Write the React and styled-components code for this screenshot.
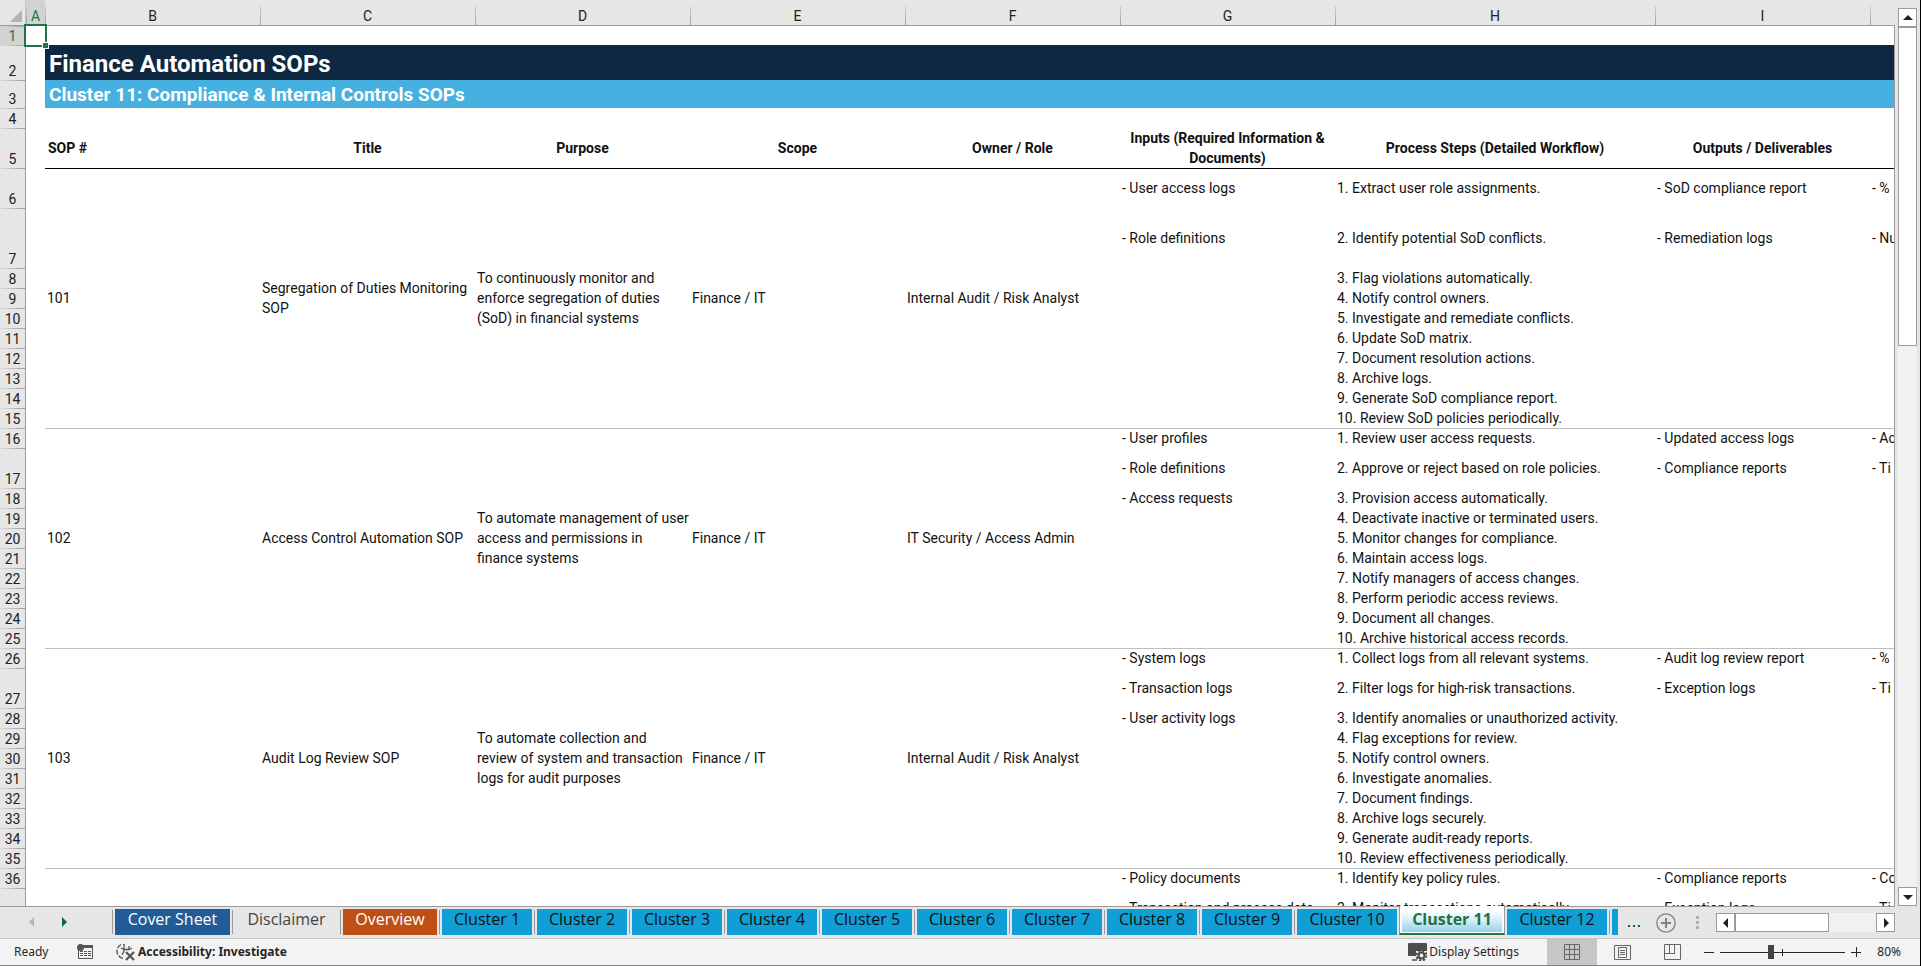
import React from "react";
import styled, { createGlobalStyle, css } from "styled-components";

const color = {
  chrome: "#e6e6e6",
  selected: "#d2d2d2",
  line: "#9b9b9b",
  rule: "#bfbfbf",
  green: "#217346",
  navy: "#0e2841",
  sky: "#46b1e1",
  tab: "#0f9ed5",
};

const sheetFont = '"Roboto", "Liberation Sans", sans-serif';
const uiFont = '"Open Sans", "Noto Sans", sans-serif';

const GlobalStyle = createGlobalStyle`
  *, *::before, *::after { box-sizing: border-box; }
  html, body { margin: 0; overflow: hidden; }
  button { margin: 0; padding: 0; border: 0; background: none; color: inherit; font: inherit; }
`;

const Window = styled.div`
  display: flex;
  flex-direction: column;
  height: 100vh;
  border-right: 1px solid #000;
  background: ${color.chrome};
  overflow: hidden;
`;

const Workspace = styled.div`
  display: flex;
  flex: 1;
  min-height: 0;
`;

const Viewport = styled.main`
  flex: 1;
  min-width: 0;
  overflow: hidden;
  background: #fff;
`;

/* ---------- grid ---------- */

const Grid = styled.table`
  width: 100%;
  table-layout: fixed;
  border-collapse: separate;
  border-spacing: 0;
  font: 14px/20px ${sheetFont};
  color: #111;
`;

const Col = styled.col`
  width: ${(p) => (p.$w ? p.$w + "px" : "auto")};
`;

const ColumnHead = styled.th`
  height: 26px;
  padding: 7px 0 0;
  font-weight: 400;
  line-height: 19px;
  text-align: center;
  vertical-align: top;
  color: ${(p) => (p.$active ? color.green : "#222")};
  background-color: ${(p) => (p.$active ? color.selected : color.chrome)};
  background-image: linear-gradient(${color.line}, ${color.line}),
    linear-gradient(#d0d0d0, ${color.line});
  background-repeat: no-repeat;
  background-size: 100% 1px, 1px 20px;
  background-position: 0 100%, 0 6px;
`;

const Corner = styled.td`
  height: 26px;
  padding: 10px 0 0 10px;
  vertical-align: top;
  background: ${color.chrome};
  box-shadow: inset 0 -1px ${color.line}, inset -1px 0 #c8c8c8;

  svg { display: block; }
`;

const RowHead = styled.th`
  height: ${(p) => p.$h}px;
  padding: 0 1px 0 0;
  font-weight: 400;
  line-height: 18px;
  text-align: center;
  vertical-align: bottom;
  color: ${(p) => (p.$active ? color.green : "#222")};
  background: linear-gradient(to right, #dcdcdc, ${color.line}) 0 0 / 100% 1px no-repeat
    ${(p) => (p.$active ? color.selected : color.chrome)};
  box-shadow: inset -1px 0 ${color.line};
`;

const cellRule = {
  black: "inset 0 1px #000",
  gray: `inset 0 1px ${color.rule}`,
};

const Cell = styled.td`
  padding: 0 0 0 2px;
  vertical-align: middle;
  white-space: ${(p) => (p.$clip ? "nowrap" : "normal")};
  box-shadow: ${(p) => cellRule[p.$rule] || "none"};
`;

const FieldHead = styled.th`
  padding: 0 3px;
  font-weight: 700;
  text-align: ${(p) => p.$align || "center"};
  vertical-align: middle;
`;

const Banner = styled.td`
  padding: 0 4px;
  color: #fff;
  font-weight: 700;
  white-space: nowrap;
  vertical-align: bottom;
  ${(p) =>
    p.$main
      ? css`background: ${color.navy}; font-size: 24px; line-height: 32px;`
      : css`background: ${color.sky}; font-size: 19px; line-height: 26px;`}
`;

const ActiveCell = styled.td`
  position: relative;
  z-index: 2;
  padding: 0;

  &::before {
    content: "";
    position: absolute;
    inset: -2px;
    border: 2px solid ${color.green};
  }

  &::after {
    content: "";
    position: absolute;
    right: -4px;
    bottom: -4px;
    width: 7px;
    height: 7px;
    border: 1px solid #fff;
    background: ${color.green};
  }
`;

/* ---------- scroll bars ---------- */

const VerticalRail = styled.div`
  display: flex;
  flex-direction: column;
  width: 26px;
  padding: 8px 3px 0 4px;
  background: linear-gradient(${color.line}, ${color.line}) 0 25px / 1px 100% no-repeat ${color.chrome};
`;

const ScrollButton = styled.button`
  display: flex;
  align-items: center;
  justify-content: center;
  flex: none;
  width: 19px;
  height: 19px;
  border: 1px solid ${color.line};
  background: #fff;
`;

const VerticalTrack = styled.div`
  flex: 1;
  background: #f1f1f1;
`;

const VerticalThumb = styled.div`
  height: 319px;
  border: 1px solid ${color.line};
  background: #fff;
`;

const HorizontalBar = styled.div`
  display: flex;
  width: 179px;
  height: 19px;
`;

const HorizontalTrack = styled.div`
  flex: 1;
  background: #f1f1f1;
`;

const HorizontalThumb = styled.div`
  width: 94px;
  height: 19px;
  border: 1px solid ${color.line};
  background: #fff;
`;

/* ---------- sheet tabs ---------- */

const TabBar = styled.nav`
  display: flex;
  height: 33px;
  padding-right: 25px;
  border-bottom: 1px solid #c3c3c3;
  background: linear-gradient(${color.line}, ${color.line}) 0 0 / calc(100% - 25px) 1px no-repeat
    ${color.chrome};
  font: 16px/20px ${uiFont};
`;

const TabArrows = styled.div`
  display: flex;
  align-items: center;
  gap: 16px;
  width: 112px;
  padding-left: 24px;
`;

const ArrowButton = styled.button`
  display: flex;
  align-items: center;
  justify-content: center;
  width: 16px;
  height: 20px;
`;

const Tabs = styled.div`
  display: flex;
  align-items: flex-start;
`;

const tones = {
  navy: css`background: #215c98; color: #fff;`,
  plain: css`color: #444;`,
  rust: css`background: #c04f15; color: #fff;`,
  sky: css`background: ${color.tab}; color: #111;`,
};

const TabSlot = styled.div`
  padding: 3px 2px 0;
  background: ${(p) =>
    p.$bare ? "none" : `linear-gradient(${color.line}, ${color.line}) 0 4px / 1px 24px no-repeat`};
  padding-left: ${(p) => (p.$bare ? 2 : 3)}px;
`;

const Tab = styled.button`
  display: block;
  width: ${(p) => p.$w}px;
  height: 26px;
  padding-bottom: 6px;
  white-space: nowrap;
  ${(p) => tones[p.$tone]}
`;

const ActiveSlot = styled.div`
  height: 29px;
  padding: 2px 2px 1px;
  border: solid ${color.line};
  border-width: 0 1px;
  border-bottom: 2px solid ${color.green};
  background: #fff;
`;

const ActiveTab = styled.button`
  display: block;
  width: 100px;
  height: 24px;
  padding-bottom: 2px;
  background: linear-gradient(#fff 10%, #d3ebf6 55%, #93d0ec);
  color: ${color.green};
  font-weight: 700;
  white-space: nowrap;
`;

const MoreTabs = styled.button`
  display: flex;
  align-items: center;
  width: 14px;
  margin: 12px 15px 0 7px;
  height: 10px;
`;

const AddSheet = styled.button`
  width: 20px;
  height: 20px;
  margin-top: 7px;

  svg { display: block; }
`;

const ScrollGroup = styled.div`
  display: flex;
  align-items: center;
  gap: 17px;
  margin-left: auto;
  padding-top: 1px;
`;

/* ---------- status bar ---------- */

const StatusBar = styled.footer`
  display: flex;
  align-items: center;
  height: 27px;
  padding: 0 19px 0 14px;
  border-bottom: 1px solid #85857d;
  background: #f3f3f3;
  color: #262626;
  font: 12px/18px "Noto Sans", "Open Sans", sans-serif;
`;

const ReadyText = styled.span`
  width: 63px;
`;

const StatusButton = styled.button`
  display: flex;
  align-items: center;
  gap: ${(p) => p.$gap || 0}px;
  font-weight: ${(p) => (p.$strong ? 700 : 400)};
  white-space: nowrap;

  svg { display: block; flex: none; }
`;

const StatusLeft = styled.div`
  display: flex;
  align-items: center;
  gap: 23px;
`;

const StatusRight = styled.div`
  display: flex;
  align-items: center;
  align-self: stretch;
  margin-left: auto;
`;

const ViewButtons = styled.div`
  display: flex;
  align-self: stretch;
  margin: 0 7px 0 28px;
`;

const ViewButton = styled.button`
  display: flex;
  align-items: center;
  justify-content: center;
  width: 50px;
  background: ${(p) => (p.$active ? "#c6c6c6" : "transparent")};
`;

const ZoomSlider = styled.input`
  appearance: none;
  width: 125px;
  height: 15px;
  margin: 0 6px;
  background: linear-gradient(#262626, #262626) 0 7px / 100% 1px no-repeat,
    linear-gradient(#262626, #262626) 62px 4px / 1px 7px no-repeat;

  &::-webkit-slider-thumb {
    appearance: none;
    width: 6px;
    height: 14px;
    background: #444;
  }
`;

const ZoomValue = styled.output`
  width: 40px;
  text-align: right;
`;

/* ---------- drawings ---------- */

const Triangle = ({ dir, fill = "#222", size = 10 }) => {
  const shapes = {
    up: "M0 7L5 2L10 7Z",
    down: "M0 3L5 8L10 3Z",
    left: "M7 0L2 5L7 10Z",
    right: "M3 0L8 5L3 10Z",
  };
  return (
    <svg width={size} height={size} viewBox="0 0 10 10" aria-hidden="true">
      <path d={shapes[dir]} fill={fill} />
    </svg>
  );
};

const MacroIcon = () => (
  <svg width="16" height="16" viewBox="0 0 16 16" aria-hidden="true">
    <path d="M5.500 1.500H15.500V14.500H1.500V6" fill="none" stroke="#555" />
    <path d="M6 1H16V4H6Z" fill="#555" />
    <circle cx="3.500" cy="3.500" r="3.500" fill="#555" />
    <path d="M3 7.500H14M3 9.500H14M3 11.500H14" stroke="#555" strokeDasharray="3 1" fill="none" />
  </svg>
);

const AccessibilityIcon = () => (
  <svg width="19" height="18" viewBox="0 0 19 18" fill="none" stroke="#555" aria-hidden="true">
    <path d="M5 1.500A7.500 7.500 0 0 0 7 15.500" strokeWidth="1.400" strokeDasharray="5 1.500" />
    <circle cx="8" cy="1.800" r="1" fill="#555" stroke="none" />
    <path d="M5 5L8 6.500H13L16 5M8 3V8L6 12M13 3V7" strokeWidth="1.300" />
    <path d="M10 9L18 17M18 9L10 17" strokeWidth="2.200" />
  </svg>
);

const DisplayIcon = () => (
  <svg width="19" height="18" viewBox="0 0 19 18" aria-hidden="true">
    <path d="M1 0H18Q19 0 19 1V8H8V13H1Q0 13 0 12V1Q0 0 1 0Z" fill="#4d4d4d" />
    <path d="M4 16H9V18H4Z" fill="#777" />
    <circle cx="13.500" cy="12.500" r="5" fill="none" stroke="#4d4d4d" strokeWidth="2" strokeDasharray="2.200 1.730" />
    <circle cx="13.500" cy="12.500" r="3" fill="#f3f3f3" stroke="#4d4d4d" strokeWidth="2.200" />
  </svg>
);

const NormalViewIcon = () => (
  <svg width="16" height="16" viewBox="0 0 16 16" fill="none" stroke="#666" aria-hidden="true">
    <path d="M0.500 0.500H15.500V15.500H0.500ZM5.500 0V16M10.500 0V16M0 5.500H16M0 10.500H16" />
  </svg>
);

const PageLayoutIcon = () => (
  <svg width="17" height="15" viewBox="0 0 17 15" fill="none" stroke="#666" aria-hidden="true">
    <path d="M0.500 0.500H16.500V14.500H0.500ZM4.500 2.500H12.500V12.500H4.500ZM6 5.500H11M6 7.500H11M6 9.500H11" />
  </svg>
);

const PageBreakIcon = () => (
  <svg width="17" height="16" viewBox="0 0 17 16" fill="none" stroke="#666" aria-hidden="true">
    <path d="M0.500 0.500H16.500V15.500H0.500ZM5.500 0V9.500M10.500 0V9.500M0 9.500H11" />
  </svg>
);

const PlusMinus = ({ plus }) => (
  <svg width="10" height="10" viewBox="0 0 10 10" stroke="#262626" aria-hidden="true">
    <path d={plus ? "M0 5.500H10M5.500 0V10" : "M0 5.500H10"} />
  </svg>
);

/* ---------- data ---------- */

const columns = ["A", "B", "C", "D", "E", "F", "G", "H", "I", ""];
const widths = [26, 19, 215, 215, 215, 215, 215, 215, 320, 215, 0];

const fields = [
  "SOP #",
  "Title",
  "Purpose",
  "Scope",
  "Owner / Role",
  "Inputs (Required Information & Documents)",
  "Process Steps (Detailed Workflow)",
  "Outputs / Deliverables",
  "",
];

const procedures = [
  {
    firstRow: 6,
    heights: [40, 60],
    rule: "black",
    merged: [
      "101",
      "Segregation of Duties Monitoring SOP",
      "To continuously monitor and enforce segregation of duties (SoD) in financial systems",
      "Finance / IT",
      "Internal Audit / Risk Analyst",
    ],
    inputs: ["- User access logs", "- Role definitions"],
    steps: [
      "1. Extract user role assignments.",
      "2. Identify potential SoD conflicts.",
      "3. Flag violations automatically.",
      "4. Notify control owners.",
      "5. Investigate and remediate conflicts.",
      "6. Update SoD matrix.",
      "7. Document resolution actions.",
      "8. Archive logs.",
      "9. Generate SoD compliance report.",
      "10. Review SoD policies periodically.",
    ],
    outputs: ["- SoD compliance report", "- Remediation logs"],
    metrics: ["- %", "- Nu"],
  },
  {
    firstRow: 16,
    heights: [20, 40],
    rule: "gray",
    merged: [
      "102",
      "Access Control Automation SOP",
      "To automate management of user access and permissions in finance systems",
      "Finance / IT",
      "IT Security / Access Admin",
    ],
    inputs: ["- User profiles", "- Role definitions", "- Access requests"],
    steps: [
      "1. Review user access requests.",
      "2. Approve or reject based on role policies.",
      "3. Provision access automatically.",
      "4. Deactivate inactive or terminated users.",
      "5. Monitor changes for compliance.",
      "6. Maintain access logs.",
      "7. Notify managers of access changes.",
      "8. Perform periodic access reviews.",
      "9. Document all changes.",
      "10. Archive historical access records.",
    ],
    outputs: ["- Updated access logs", "- Compliance reports"],
    metrics: ["- Ac", "- Ti"],
  },
  {
    firstRow: 26,
    heights: [20, 40],
    rule: "gray",
    merged: [
      "103",
      "Audit Log Review SOP",
      "To automate collection and review of system and transaction logs for audit purposes",
      "Finance / IT",
      "Internal Audit / Risk Analyst",
    ],
    inputs: ["- System logs", "- Transaction logs", "- User activity logs"],
    steps: [
      "1. Collect logs from all relevant systems.",
      "2. Filter logs for high-risk transactions.",
      "3. Identify anomalies or unauthorized activity.",
      "4. Flag exceptions for review.",
      "5. Notify control owners.",
      "6. Investigate anomalies.",
      "7. Document findings.",
      "8. Archive logs securely.",
      "9. Generate audit-ready reports.",
      "10. Review effectiveness periodically.",
    ],
    outputs: ["- Audit log review report", "- Exception logs"],
    metrics: ["- %", "- Ti"],
  },
  {
    firstRow: 36,
    heights: [20, 40],
    rule: "gray",
    merged: ["", "", "", "", ""],
    inputs: ["- Policy documents", "- Transaction and process data"],
    steps: ["1. Identify key policy rules.", "2. Monitor transactions automatically."],
    outputs: ["- Compliance reports", "- Exception logs"],
    metrics: ["- Co", "- Ti"],
  },
];

const tabs = [
  { name: "Cover Sheet", w: 115, tone: "navy" },
  { name: "Disclaimer", w: 103, tone: "plain" },
  { name: "Overview", w: 94, tone: "rust" },
  ...[1, 2, 3, 4, 5, 6, 7, 8, 9].map((n) => ({ name: `Cluster ${n}`, w: 90, tone: "sky" })),
  { name: "Cluster 10", w: 100, tone: "sky" },
  { name: "Cluster 11", active: true },
  { name: "Cluster 12", w: 100, tone: "sky", bare: true },
  { name: "", label: "Next sheet", w: 6, tone: "sky" },
];

const ProcedureRows = ({ item }) =>
  item.steps.map((step, i) => {
    const rule = i === 0 ? item.rule : undefined;
    return (
      <tr key={step}>
        <RowHead scope="row" $h={item.heights[i] || 20}>
          {item.firstRow + i}
        </RowHead>
        <Cell />
        {i === 0 &&
          item.merged.map((text, c) => (
            <Cell key={c} rowSpan={item.steps.length} $rule={rule}>
              {text}
            </Cell>
          ))}
        <Cell $rule={rule}>{item.inputs[i]}</Cell>
        <Cell $rule={rule}>{step}</Cell>
        <Cell $rule={rule}>{item.outputs[i]}</Cell>
        <Cell $rule={rule} $clip>
          {item.metrics[i]}
        </Cell>
      </tr>
    );
  });

const Sheet = () => (
  <Grid>
    <colgroup>
      {widths.map((w, i) => (
        <Col key={i} $w={w} />
      ))}
    </colgroup>
    <thead>
      <tr>
        <Corner>
          <svg width="12" height="12" viewBox="0 0 12 12" aria-hidden="true">
            <path d="M12 0V12H0Z" fill="#b2b2b2" />
          </svg>
        </Corner>
        {columns.map((name, i) => (
          <ColumnHead key={i} scope="col" $active={name === "A"}>
            {name}
          </ColumnHead>
        ))}
      </tr>
    </thead>
    <tbody>
      <tr>
        <RowHead scope="row" $h={19} $active>1</RowHead>
        <ActiveCell />
        <Cell colSpan={9} />
      </tr>
      <tr>
        <RowHead scope="row" $h={35}>2</RowHead>
        <Cell />
        <Banner colSpan={9} $main>Finance Automation SOPs</Banner>
      </tr>
      <tr>
        <RowHead scope="row" $h={28}>3</RowHead>
        <Cell />
        <Banner colSpan={9}>Cluster 11: Compliance &amp; Internal Controls SOPs</Banner>
      </tr>
      <tr>
        <RowHead scope="row" $h={20}>4</RowHead>
        <Cell colSpan={10} />
      </tr>
      <tr>
        <RowHead scope="row" $h={40}>5</RowHead>
        <Cell />
        {fields.map((name, i) => (
          <FieldHead key={i} scope="col" $align={i === 0 ? "left" : "center"}>
            {name}
          </FieldHead>
        ))}
      </tr>
      {procedures.map((item) => (
        <ProcedureRows key={item.firstRow} item={item} />
      ))}
    </tbody>
  </Grid>
);

export default function App() {
  return (
    <Window>
      <GlobalStyle />
      <Workspace>
        <Viewport>
          <Sheet />
        </Viewport>
        <VerticalRail>
          <ScrollButton aria-label="Scroll up"><Triangle dir="up" /></ScrollButton>
          <VerticalTrack><VerticalThumb /></VerticalTrack>
          <ScrollButton aria-label="Scroll down"><Triangle dir="down" /></ScrollButton>
        </VerticalRail>
      </Workspace>

      <TabBar aria-label="Sheets">
        <TabArrows>
          <ArrowButton aria-label="Previous sheets"><Triangle dir="left" fill="#b8b8b8" /></ArrowButton>
          <ArrowButton aria-label="Next sheets"><Triangle dir="right" fill="#0b6b37" /></ArrowButton>
        </TabArrows>
        <Tabs>
          {tabs.map((t) =>
            t.active ? (
              <ActiveSlot key={t.name}>
                <ActiveTab aria-current="page">{t.name}</ActiveTab>
              </ActiveSlot>
            ) : (
              <TabSlot key={t.name} $bare={t.bare}>
                <Tab $w={t.w} $tone={t.tone} aria-label={t.label}>{t.name}</Tab>
              </TabSlot>
            )
          )}
        </Tabs>
        <MoreTabs aria-label="More sheets">
          <svg width="14" height="10" viewBox="0 0 14 10" aria-hidden="true">
            <path d="M1 7H3V9H1ZM6 7H8V9H6ZM11 7H13V9H11Z" fill="#0b6b37" />
          </svg>
        </MoreTabs>
        <AddSheet aria-label="New sheet">
          <svg width="20" height="20" viewBox="0 0 20 20" fill="none" stroke="#808080" aria-hidden="true">
            <circle cx="10" cy="10" r="9.200" strokeWidth="1.300" />
            <path d="M10 5V15M5 10H15" strokeWidth="2" />
          </svg>
        </AddSheet>
        <ScrollGroup>
          <svg width="3" height="13" viewBox="0 0 3 13" aria-hidden="true">
            <path d="M0 0H3V3H0ZM0 5H3V8H0ZM0 10H3V13H0Z" fill="#b0b0b0" />
          </svg>
          <HorizontalBar>
            <ScrollButton aria-label="Scroll left"><Triangle dir="left" /></ScrollButton>
            <HorizontalTrack><HorizontalThumb /></HorizontalTrack>
            <ScrollButton aria-label="Scroll right"><Triangle dir="right" /></ScrollButton>
          </HorizontalBar>
        </ScrollGroup>
      </TabBar>

      <StatusBar>
        <ReadyText>Ready</ReadyText>
        <StatusLeft>
          <StatusButton aria-label="Record macro"><MacroIcon /></StatusButton>
          <StatusButton $gap={3} $strong><AccessibilityIcon />Accessibility: Investigate</StatusButton>
        </StatusLeft>
        <StatusRight>
          <StatusButton $gap={2}><DisplayIcon />Display Settings</StatusButton>
          <ViewButtons>
            <ViewButton $active aria-label="Normal"><NormalViewIcon /></ViewButton>
            <ViewButton aria-label="Page layout"><PageLayoutIcon /></ViewButton>
            <ViewButton aria-label="Page break preview"><PageBreakIcon /></ViewButton>
          </ViewButtons>
          <StatusButton aria-label="Zoom out"><PlusMinus /></StatusButton>
          <ZoomSlider type="range" min="0" max="100" defaultValue="40" aria-label="Zoom" />
          <StatusButton aria-label="Zoom in"><PlusMinus plus /></StatusButton>
          <ZoomValue>80%</ZoomValue>
        </StatusRight>
      </StatusBar>
    </Window>
  );
}
